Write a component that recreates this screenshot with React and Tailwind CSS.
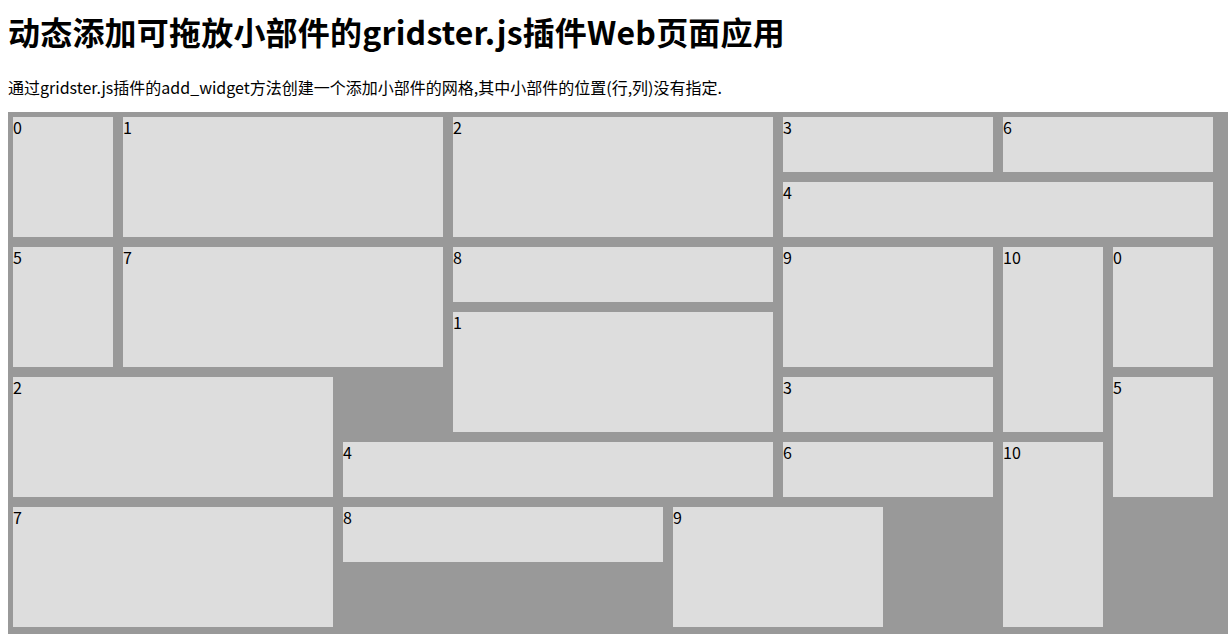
const widgets = [
  { n: "0", c: "col-start-1 row-start-1 col-span-1 row-span-2" },
  { n: "1", c: "col-start-2 row-start-1 col-span-3 row-span-2" },
  { n: "2", c: "col-start-5 row-start-1 col-span-3 row-span-2" },
  { n: "3", c: "col-start-8 row-start-1 col-span-2 row-span-1" },
  { n: "6", c: "col-start-10 row-start-1 col-span-2 row-span-1" },
  { n: "4", c: "col-start-8 row-start-2 col-span-4 row-span-1" },
  { n: "5", c: "col-start-1 row-start-3 col-span-1 row-span-2" },
  { n: "7", c: "col-start-2 row-start-3 col-span-3 row-span-2" },
  { n: "8", c: "col-start-5 row-start-3 col-span-3 row-span-1" },
  { n: "9", c: "col-start-8 row-start-3 col-span-2 row-span-2" },
  { n: "10", c: "col-start-10 row-start-3 col-span-1 row-span-3" },
  { n: "0", c: "col-start-11 row-start-3 col-span-1 row-span-2" },
  { n: "1", c: "col-start-5 row-start-4 col-span-3 row-span-2" },
  { n: "2", c: "col-start-1 row-start-5 col-span-3 row-span-2" },
  { n: "3", c: "col-start-8 row-start-5 col-span-2 row-span-1" },
  { n: "5", c: "col-start-11 row-start-5 col-span-1 row-span-2" },
  { n: "4", c: "col-start-4 row-start-6 col-span-4 row-span-1" },
  { n: "6", c: "col-start-8 row-start-6 col-span-2 row-span-1" },
  { n: "10", c: "col-start-10 row-start-6 col-span-1 row-span-3" },
  { n: "7", c: "col-start-1 row-start-7 col-span-3 row-span-2" },
  { n: "8", c: "col-start-4 row-start-7 col-span-3 row-span-1" },
  { n: "9", c: "col-start-7 row-start-7 col-span-2 row-span-2" },
];

export default function App() {
  return (
    <div
      className="px-2 text-black bg-white min-h-screen"
      style={{ fontFamily: '"Noto Sans CJK SC", "Noto Sans", sans-serif' }}
    >
      <h1 className="pt-[12px] text-[32px] font-bold leading-[38px] whitespace-nowrap tracking-[0.2px]">
        动态添加可拖放小部件的gridster.js插件Web页面应用
      </h1>
      <p className="mt-[27px] text-[16px] leading-[20px] whitespace-nowrap">
        通过gridster.js插件的add_widget方法创建一个添加小部件的网格,其中小部件的位置(行,列)没有指定.
      </p>
      <div className="mt-[15px] w-[1220px] bg-[#999999] p-[5px] pb-[20px] grid grid-cols-[repeat(11,100px)] auto-rows-[55px] gap-[10px]">
        {widgets.map((w, i) => (
          <div key={i} className={`${w.c} bg-[#dddddd] text-[16px] leading-[20px]`}>
            {w.n}
          </div>
        ))}
      </div>
    </div>
  );
}
